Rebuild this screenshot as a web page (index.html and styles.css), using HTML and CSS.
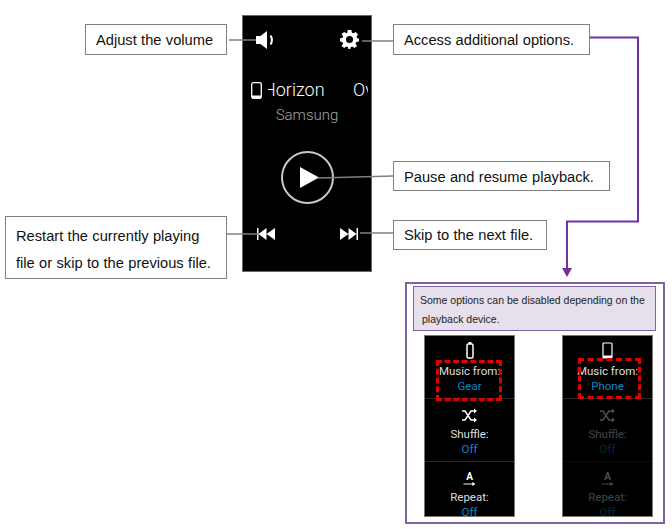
FILE: index.html
```html
<!DOCTYPE html>
<html lang="en">
<head>
<meta charset="utf-8">
<title>Music controller guide</title>
<link rel="stylesheet" href="styles.css">
</head>
<body>
<main class="canvas">
  <section class="phone">
    <div class="phone-top">
      <svg class="ico-vol" viewBox="0 0 20 18"><path d="M0 5h4.500L11 0v18l-6.500-5H0z" fill="#fff"/><path d="M14.500 4.500q2.800 4.500 0 9" fill="none" stroke="#fff" stroke-width="2"/></svg>
      <svg class="ico-gear" viewBox="0 0 20 20"><path fill="#fff" fill-rule="evenodd" d="M8 0h4l.5 2.800 1.700.7L16.600 2 19 4.800l-1.600 2.300.7 1.700L20 9v3l-2.900.7-.7 1.700 1.600 2.400L15.200 19l-2.300-1.600-1.700.7L10.800 20h-2l-.5-2-1.700-.7L4.400 19 1.600 16.800l1.600-2.400-.7-1.700L0 12V8.800l2.500-.4.700-1.700L1.600 4.300 4.400 2l2.300 1.500 1-.7zM10 6.300a3.700 3.700 0 1 0 0 7.400 3.700 3.700 0 0 0 0-7.400z"/></svg>
    </div>
    <div class="track">
      <svg class="ico-device" viewBox="0 0 11 17"><rect x=".7" y=".7" width="9.600" height="15.600" rx="1.500" fill="none" stroke="#fff" stroke-width="1.300"/><rect x="1" y="13.500" width="9" height="3" fill="#fff"/></svg>
      <div class="track-clip"><span class="track-title">Horizon</span><span class="track-next">Ov</span></div>
    </div>
    <div class="artist">Samsung</div>
    <div class="play"><svg class="ico-play" viewBox="0 0 19 21"><path d="M0 0l19 10.500L0 21z" fill="#fff"/></svg></div>
    <div class="phone-bottom">
      <svg class="ico-skip" viewBox="0 0 18 12"><path fill="#fff" d="M0 0h1.500v12H0zM1.500 6L9.500 0v12zM9.500 6L18 0v12z"/></svg>
      <svg class="ico-skip" viewBox="0 0 18 12"><path fill="#fff" d="M18 0h-1.500v12H18zM16.500 6L8.500 0v12zM8.500 6L0 0v12z"/></svg>
    </div>
  </section>

  <svg class="lines" viewBox="0 0 672 529">
    <g fill="none" stroke="#808080" stroke-width="1.500">
      <path d="M229 40h27"/><path d="M362 41h31"/><path d="M318 178l75-2"/><path d="M227 234h31"/><path d="M360 233h33"/>
    </g>
    <path d="M590 37.500h48v184h-71v47" fill="none" stroke="#7030a0" stroke-width="2"/>
    <path d="M562 268h10l-5 9z" fill="#7030a0"/>
  </svg>

  <div class="label label-volume">Adjust the volume</div>
  <div class="label label-options">Access additional options.</div>
  <div class="label label-pause">Pause and resume playback.</div>
  <div class="label label-skip">Skip to the next file.</div>
  <div class="label label-restart">Restart the currently playing<br>file or skip to the previous file.</div>

  <section class="panel">
    <div class="note">Some options can be disabled depending on the<br><span class="note-second">playback device.</span></div>
    <div class="minis">
      <div class="mini">
        <div class="row row-first">
          <svg class="ico-battery" viewBox="0 0 8 17"><rect x="1" y="2" width="6" height="14" rx="1.500" fill="none" stroke="#fff" stroke-width="1.500"/><rect x="2.500" y="0" width="3" height="2" fill="#fff"/></svg>
          <div class="row-name">Music from:</div><div class="row-val">Gear</div>
          <div class="dash dash-left"></div>
        </div>
        <div class="row">
          <svg class="ico-shuffle" viewBox="0 0 15 14"><path d="M0 2.500h3l6 9h3M0 11.500h3l6-9h3" fill="none" stroke="#fff" stroke-width="1.500"/><path d="M12 0l3 2.500-3 2.500zM12 9l3 2.500-3 2.500z" fill="#fff"/></svg>
          <div class="row-name">Shuffle:</div><div class="row-val">Off</div>
        </div>
        <div class="row">
          <div class="ico-repeat"><span class="ico-a">A</span><svg class="ico-arrow" viewBox="0 0 15 5"><path d="M0 2.500h12" stroke="#fff" stroke-width="1.200"/><path d="M11 0l4 2.500L11 5z" fill="#fff"/></svg></div>
          <div class="row-name">Repeat:</div><div class="row-val">Off</div>
        </div>
      </div>
      <div class="mini">
        <div class="row row-first">
          <svg class="ico-phone" viewBox="0 0 11 17"><rect x="1" y="1" width="9" height="15" rx="1" fill="none" stroke="#fff" stroke-width="1.200"/><rect x="1" y="13.500" width="9" height="2.500" fill="#fff"/></svg>
          <div class="row-name">Music from:</div><div class="row-val">Phone</div>
          <div class="dash dash-right"></div>
        </div>
        <div class="row row-off">
          <svg class="ico-shuffle" viewBox="0 0 15 14"><path d="M0 2.500h3l6 9h3M0 11.500h3l6-9h3" fill="none" stroke="#fff" stroke-width="1.500"/><path d="M12 0l3 2.500-3 2.500zM12 9l3 2.500-3 2.500z" fill="#fff"/></svg>
          <div class="row-name">Shuffle:</div><div class="row-val">Off</div>
        </div>
        <div class="row row-off">
          <div class="ico-repeat"><span class="ico-a">A</span><svg class="ico-arrow" viewBox="0 0 15 5"><path d="M0 2.500h12" stroke="#fff" stroke-width="1.200"/><path d="M11 0l4 2.500L11 5z" fill="#fff"/></svg></div>
          <div class="row-name">Repeat:</div><div class="row-val">Off</div>
        </div>
      </div>
    </div>
  </section>
</main>
</body>
</html>
```
FILE: styles.css
```css
* { box-sizing: border-box; }
html, body { margin: 0; padding: 0; background: #fff; }
.canvas { position: relative; width: 672px; height: 529px; overflow: hidden; font-family: "Liberation Sans", Arial, sans-serif; }

.lines { position: absolute; left: 0; top: 0; width: 672px; height: 529px; pointer-events: none; }

.label {
  position: absolute; background: #fff; border: 1px solid #808080; color: #111;
  font-size: 14.670px; word-spacing: 0.300px; padding-left: 10px; display: flex; align-items: center; white-space: nowrap;
}
.label-volume { left: 85px; top: 24px; width: 142px; height: 31px; }
.label-options { left: 393px; top: 24px; width: 197px; height: 31px; }
.label-pause { left: 393px; top: 161px; width: 217px; height: 30px; padding-top: 2px; }
.label-skip { left: 393px; top: 220px; width: 154px; height: 30px; }
.label-restart { left: 5px; top: 216px; width: 222px; height: 63px; line-height: 27px; padding-top: 5px; }

.phone {
  position: absolute; left: 242px; top: 15px; width: 130px; height: 257px; background: #000;
  border: 1px solid #666; font-family: Roboto, sans-serif; display: flex; flex-direction: column;
}
.phone-top { display: flex; justify-content: space-between; align-items: center; padding: 12px 12px 0 13px; height: 35px; }
.ico-vol { width: 20px; height: 18px; }
.ico-gear { width: 19px; height: 19px; }
.track { display: flex; align-items: center; margin-top: 27px; padding-left: 8px; height: 24px; }
.ico-device { width: 11px; height: 17px; flex: none; }
.track-clip { width: 100px; margin-left: 6px; overflow: hidden; white-space: nowrap; color: #fff; font-size: 18px; font-weight: 300; line-height: 24px; display: flex; }
.track-title { margin-left: -5px; width: 90px; flex: none; }
.track-next { flex: none; }
.artist { color: #a6a6a6; font-size: 15px; font-weight: 300; line-height: 20px; text-align: center; margin-top: 3px; }
.play { width: 53px; height: 53px; border: 2px solid #c8c8c8; border-radius: 50%; margin: 26px 0 0 38px; display: flex; align-items: center; justify-content: center; }
.ico-play { width: 19px; height: 21px; margin-left: 3px; }
.phone-bottom { display: flex; justify-content: space-between; padding: 24px 13px 0 14px; }
.ico-skip { width: 18px; height: 12px; }

.panel { position: absolute; left: 405px; top: 282px; width: 260px; height: 242px; border: 2px solid #8064a2; padding: 2px 0 0 6px; }
.note {
  width: 243px; height: 45px; background: #e6e0ec; border: 1px solid #8064a2; color: #222;
  font-size: 10.500px; line-height: 19px; padding: 4px 0 0 6px; white-space: nowrap;
}
.note-second { padding-left: 2px; }
.minis { display: flex; gap: 47px; margin: 4px 0 0 11px; }
.mini { width: 91px; height: 182px; background: #000; border: 1px solid #777; overflow: hidden; font-family: Roboto, sans-serif; text-align: center; }
.row { position: relative; height: 63px; padding-top: 9px; border-bottom: 1px solid #2a2a2a; display: flex; flex-direction: column; align-items: center; }
.row-first { height: 63px; padding-top: 6px; }
.row-name { color: #ddd; font-size: 11.500px; line-height: 15px; margin-top: 4px; }
.row-first .row-name { margin-top: 5px; }
.row-val { color: #1185c0; font-size: 11.500px; line-height: 15px; }
.row-off { opacity: 0.3; }
.ico-battery { width: 8px; height: 17px; flex: none; }
.ico-phone { width: 11px; height: 17px; flex: none; }
.ico-shuffle { width: 15px; height: 15px; flex: none; }
.ico-repeat { height: 15px; display: flex; flex-direction: column; align-items: center; }
.ico-a { color: #fff; font-size: 10px; font-weight: 700; line-height: 11px; }
.ico-arrow { width: 15px; height: 5px; display: block; }
.dash { position: absolute; top: 24px; height: 41px; border: 3px dashed #e00000; }
.dash-left { left: 11px; width: 66px; }
.dash-right { left: 15px; width: 63px; top: 22px; }
```
